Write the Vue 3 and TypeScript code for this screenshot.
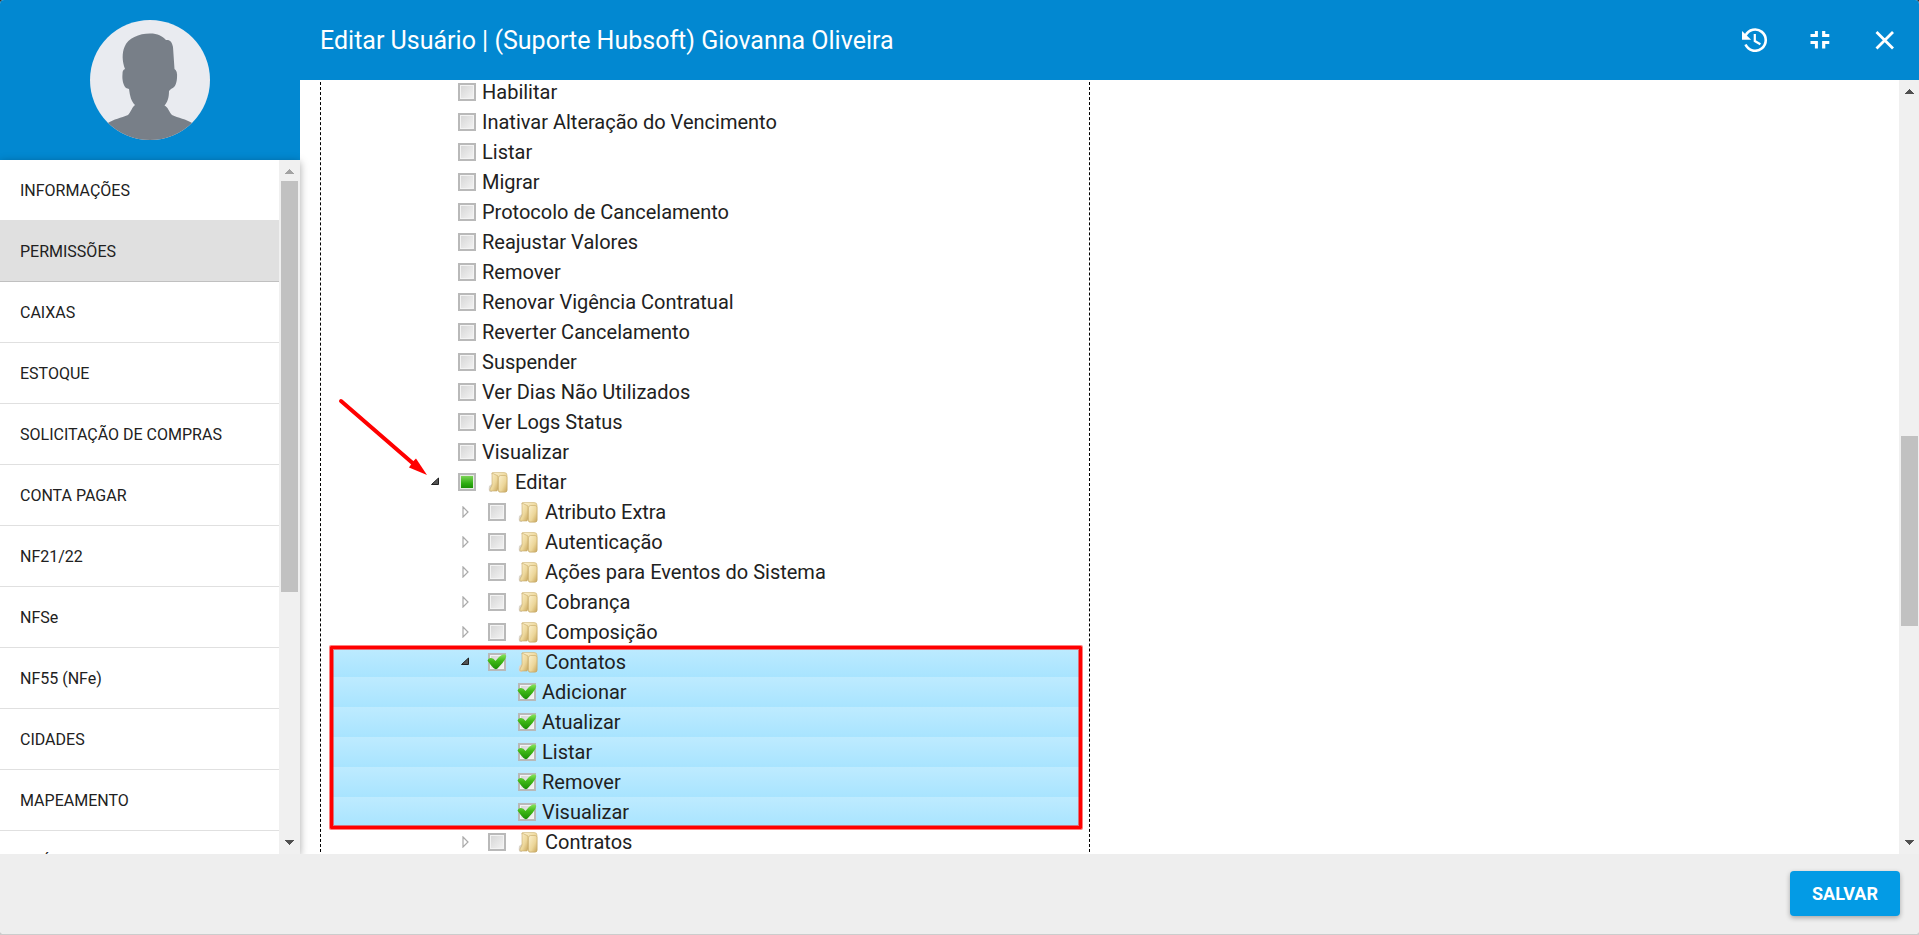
<script setup lang="ts">
import { ref } from 'vue'

type State = 'off' | 'partial' | 'on'
interface Row {
  label: string
  level: number
  state: State
  folder?: boolean
  open?: boolean
  selected?: boolean
}

const leaf = (label: string): Row => ({ label, level: 0, state: 'off' })
const folder = (label: string): Row => ({ label, level: 1, state: 'off', folder: true })
const child = (label: string): Row => ({ label, level: 2, state: 'on', selected: true })

const rows = ref<Row[]>([
  ...[
    'Habilitar',
    'Inativar Alteração do Vencimento',
    'Listar',
    'Migrar',
    'Protocolo de Cancelamento',
    'Reajustar Valores',
    'Remover',
    'Renovar Vigência Contratual',
    'Reverter Cancelamento',
    'Suspender',
    'Ver Dias Não Utilizados',
    'Ver Logs Status',
    'Visualizar',
  ].map(leaf),
  { label: 'Editar', level: 0, state: 'partial', folder: true, open: true },
  ...['Atributo Extra', 'Autenticação', 'Ações para Eventos do Sistema', 'Cobrança', 'Composição'].map(folder),
  { label: 'Contatos', level: 1, state: 'on', folder: true, open: true, selected: true },
  ...['Adicionar', 'Atualizar', 'Listar', 'Remover', 'Visualizar'].map(child),
  folder('Contratos'),
])

const tabs = [
  'INFORMAÇÕES',
  'PERMISSÕES',
  'CAIXAS',
  'ESTOQUE',
  'SOLICITAÇÃO DE COMPRAS',
  'CONTA PAGAR',
  'NF21/22',
  'NFSe',
  'NF55 (NFe)',
  'CIDADES',
  'MAPEAMENTO',
  'GRÁFICOS',
]
const active = ref('PERMISSÕES')

function toggle(row: Row) {
  row.state = row.state === 'on' ? 'off' : 'on'
}
</script>

<template>
  <div class="backdrop">
    <div class="dialog">
      <div class="upper">
        <aside class="side">
          <div class="profile">
            <svg class="avatar" viewBox="0 0 120 120" role="img" aria-label="Foto do usuário">
              <defs>
                <clipPath id="round"><circle cx="60" cy="60" r="60" /></clipPath>
              </defs>
              <g clip-path="url(#round)">
                <rect width="120" height="120" fill="#e9ebf0" />
                <path
                  fill="#787f88"
                  d="M60 13.500C68 13.500 72 16 76 20C80 19.500 82 22 83 27L84.500 49C86.500 50 87.500 53 87 58C86.500 64 85 67.500 81 69L79 71C79 78 77.500 82 74.500 85.500C78 87 79 92 82 95C88 98 96 99 103 103.500L103 120H17V103.500C24 99 31 98 38 95C41 92 42 87 45 85C41 81 40 76 39 69L36 68C33 65 32 59 32.500 54C32.500 51 33 50 35 49C32 41 32 33 34.500 27C38 18 49 13.500 60 13.500Z"
                />
              </g>
            </svg>
          </div>
          <div class="tabs">
            <nav class="tab-list">
              <button
                v-for="tab in tabs"
                :key="tab"
                type="button"
                class="tab"
                :class="{ active: tab === active }"
                @click="active = tab"
              >
                {{ tab }}
              </button>
            </nav>
            <div class="bar side-bar">
              <svg class="arrow up faded" viewBox="0 0 9 5"><path d="M4 0H5V1H6V2H7V3H8V4H9V5H0V4H1V3H2V2H3V1H4Z" /></svg>
              <div class="rail"><div class="thumb"></div></div>
              <svg class="arrow down" viewBox="0 0 9 5"><path d="M0 0H9V1H8V2H7V3H6V4H5V5H4V4H3V3H2V2H1V1H0Z" /></svg>
            </div>
          </div>
        </aside>

        <section class="main">
          <header class="top">
            <h1>Editar Usuário | (Suporte Hubsoft) Giovanna Oliveira</h1>
            <div class="actions">
              <button type="button" aria-label="Histórico">
                <svg viewBox="0 0 26 24">
                  <path d="M3.500 16.500A10.600 10.600 0 1 0 3.600 7.500" fill="none" stroke="#fff" stroke-width="2.600" />
                  <path d="M0 3V11.700H9.200Z" fill="#fff" />
                  <path d="M12.800 6V13L18.400 16.300" fill="none" stroke="#fff" stroke-width="2.200" />
                </svg>
              </button>
              <button type="button" aria-label="Sair da tela cheia">
                <svg viewBox="0 0 26 24">
                  <path d="M7.400 3H4.400V6H0V9H7.400ZM11.600 3V9H18.800V6H14.800V3ZM0 13V16H4.400V20.600H7.400V13ZM11.600 13V20.600H14.800V16H18.800V13Z" transform="translate(3.500 0)" fill="#fff" />
                </svg>
              </button>
              <button type="button" aria-label="Fechar">
                <svg viewBox="0 0 26 24">
                  <path d="M4.500 4L21 20.500M21 4L4.500 20.500" stroke="#fff" stroke-width="2.800" />
                </svg>
              </button>
            </div>
          </header>
          <div class="body">
            <div class="view">
              <div class="tree">
                <div
                  v-for="(row, i) in rows"
                  :key="i"
                  class="row"
                  :class="['level-' + row.level, { selected: row.selected, leaf: !row.folder }]"
                >
                  <button
                    v-if="row.folder"
                    type="button"
                    class="expander"
                    :aria-label="(row.open ? 'Recolher ' : 'Expandir ') + row.label"
                    :aria-expanded="!!row.open"
                  >
                    <svg viewBox="0 0 12 12">
                      <path v-if="row.open" d="M9.500 2V8.500H2.500Z" fill="#555" stroke="#222" />
                      <path v-else d="M4 1L9 6L4 11Z" fill="#fff" stroke="#aaa" stroke-width="1.200" />
                    </svg>
                  </button>
                  <span v-else class="expander"></span>
                  <span class="check">
                    <input
                      :id="'perm-' + i"
                      type="checkbox"
                      :checked="row.state === 'on'"
                      :indeterminate="row.state === 'partial'"
                      @change="toggle(row)"
                    />
                    <svg v-if="row.state === 'on'" class="tick" viewBox="0 0 20 18">
                      <defs>
                        <linearGradient id="green" x1="0" y1="0" x2="0" y2="1">
                          <stop offset="0" stop-color="#8be465" />
                          <stop offset="0.450" stop-color="#3fba16" />
                          <stop offset="1" stop-color="#1c8f06" />
                        </linearGradient>
                      </defs>
                      <path d="M0.500 7.500Q1.500 4.500 4 5Q6.500 5 8.500 8Q11.500 3.500 15.500 1.500Q19 0.500 19.300 3Q19 6 15.500 10L10.500 15.500Q8.500 17 6.500 15Q3.500 12 0.500 7.500Z" fill="url(#green)" />
                    </svg>
                  </span>
                  <svg v-if="row.folder" class="folder" viewBox="0 0 20 21">
                    <defs>
                      <linearGradient id="gold" x1="0" y1="0" x2="1" y2="1">
                        <stop offset="0" stop-color="#fbf0cd" />
                        <stop offset="0.600" stop-color="#ecd699" />
                        <stop offset="1" stop-color="#c7a55c" />
                      </linearGradient>
                    </defs>
                    <path d="M1 14L4 12V20H2Q0 19 1 14Z" fill="#ddd8ce" />
                    <path d="M4 1.500Q4 0.500 5 0.500H16Q19 0.500 19 3V18Q19 20 17 20H11Z" fill="url(#gold)" stroke="#cfb577" stroke-width="0.600" />
                    <path d="M4 1L10 4V17L9 19H2.500Q1.500 18.500 2 17L4 13Z" fill="url(#gold)" stroke="#c6a968" stroke-width="0.600" />
                    <path d="M10.500 6Q10.500 3.500 12.500 3.500H17Q19 3.500 19 5.500V18Q19 20 17 20H12Q10.500 20 10.500 18Z" fill="url(#gold)" stroke="#c6a968" stroke-width="0.600" />
                  </svg>
                  <label :for="'perm-' + i">{{ row.label }}</label>
                </div>
                <div class="highlight"></div>
                <svg class="pointer" viewBox="0 0 90 78">
                  <path d="M3 3L78 68" stroke="#f00" stroke-width="4" stroke-linecap="round" />
                  <path d="M89 77L78 60.500L75 63.500L71 69.500Z" fill="#f00" />
                </svg>
              </div>
            </div>
            <div class="bar main-bar">
              <svg class="arrow up" viewBox="0 0 9 5"><path d="M4 0H5V1H6V2H7V3H8V4H9V5H0V4H1V3H2V2H3V1H4Z" /></svg>
              <div class="rail"><div class="thumb"></div></div>
              <svg class="arrow down" viewBox="0 0 9 5"><path d="M0 0H9V1H8V2H7V3H6V4H5V5H4V4H3V3H2V2H1V1H0Z" /></svg>
            </div>
          </div>
        </section>
      </div>
      <footer class="foot">
        <button type="button" class="save">SALVAR</button>
      </footer>
    </div>
  </div>
</template>

<style>
body {
  margin: 0;
}
</style>

<style scoped>
* {
  box-sizing: border-box;
}
.backdrop {
  height: 100vh;
  padding-bottom: 1px;
  background: linear-gradient(#333 50%, #ccc 50%);
  font-family: Roboto, "Liberation Sans", sans-serif;
  color: #212121;
}
button {
  padding: 0;
  border: 0;
  background: none;
  font: inherit;
  color: inherit;
  cursor: pointer;
}
svg {
  display: block;
}
.dialog {
  display: flex;
  flex-direction: column;
  height: 100%;
  overflow: hidden;
  border-radius: 4px;
  background: #fff;
}
.upper {
  display: flex;
  flex: 1;
  min-height: 0;
}
.side {
  display: flex;
  flex-direction: column;
  width: 300px;
  z-index: 1;
}
.profile {
  display: flex;
  flex: none;
  align-items: center;
  justify-content: center;
  height: 160px;
  background: #0288d1;
}
.avatar {
  width: 120px;
  height: 120px;
}
.tabs {
  display: flex;
  flex: 1;
  min-height: 0;
  background: #fff;
  box-shadow: 0 2px 8px rgba(0, 0, 0, 0.35);
}
.tab-list {
  flex: 1;
  overflow: hidden;
}
.tab {
  display: block;
  width: 100%;
  height: 61px;
  padding: 0 20px;
  border-bottom: 1px solid #e0e0e0;
  font-size: 16px;
  text-align: left;
}
.tab.active {
  border-bottom-color: #c0c0c0;
  background: #e0e0e0;
}
.bar {
  display: flex;
  flex: none;
  flex-direction: column;
  align-items: center;
  background: #f0f0f0;
}
.side-bar {
  width: 21px;
}
.main-bar {
  width: 20px;
}
.arrow {
  width: 9px;
  height: 5px;
  fill: #505050;
}
.arrow.up {
  margin: 9px 0 7px;
}
.arrow.down {
  margin: 7px 0 9px;
}
.arrow.faded {
  fill: #a3a3a3;
}
.rail {
  flex: 1;
  width: 17px;
}
.thumb {
  background: #c1c1c1;
}
.side-bar .thumb {
  height: 63%;
}
.main-bar .thumb {
  height: 26%;
  margin-top: 335px;
}
.main {
  display: flex;
  flex: 1;
  flex-direction: column;
  min-width: 0;
}
.top {
  display: flex;
  flex: none;
  align-items: center;
  justify-content: space-between;
  height: 80px;
  padding: 0 21px 0 20px;
  background: #0288d1;
  color: #fff;
}
h1 {
  margin: 0;
  font-size: 25px;
  font-weight: 400;
}
.actions {
  display: flex;
  gap: 39px;
}
.actions svg {
  width: 26px;
  height: 24px;
}
.body {
  display: flex;
  flex: 1;
  min-height: 0;
}
.view {
  flex: 1;
  min-width: 0;
  padding-left: 20px;
  overflow: hidden;
}
.tree {
  position: relative;
  width: 770px;
  margin-top: -3px;
  padding: 0 10px;
  border: 1px dashed #000;
  border-width: 0 1px;
}
.row {
  display: flex;
  align-items: center;
  height: 30px;
  font-size: 20px;
  line-height: 30px;
}
.level-0 {
  padding-left: 98px;
}
.level-1 {
  padding-left: 128px;
}
.level-2 {
  padding-left: 158px;
}
.selected {
  background: linear-gradient(#beebff, #a8e4ff);
}
.expander {
  flex: none;
  width: 29px;
  height: 12px;
}
.expander svg {
  width: 12px;
  height: 12px;
}
.check {
  position: relative;
  flex: none;
  width: 18px;
  height: 18px;
}
.check input {
  display: block;
  width: 18px;
  height: 18px;
  margin: 0;
  appearance: none;
  border: 2px solid #b9b9b9;
  background: linear-gradient(135deg, #d4d4d4, #f4f4f4);
  box-shadow: inset 0 0 0 1px #f3f3f3;
}
.check input:indeterminate {
  background: linear-gradient(#86d860, #2fae12 60%, #188a04);
  box-shadow: inset 0 0 0 1px #e4eee0;
}
.tick {
  position: absolute;
  top: 0;
  left: -1px;
  width: 20px;
  height: 18px;
  pointer-events: none;
}
.folder {
  flex: none;
  width: 20px;
  height: 21px;
  margin-left: 12px;
}
.row label {
  margin-left: 7px;
}
.leaf label {
  margin-left: 6px;
}
.highlight {
  position: absolute;
  top: 569px;
  left: 9px;
  width: 752px;
  height: 183px;
  border: 3px solid #f00;
  border-radius: 1px;
  box-shadow: 0 0 0 1px rgba(255, 0, 0, 0.5), inset 0 0 0 1px rgba(255, 0, 0, 0.5);
  pointer-events: none;
}
.pointer {
  position: absolute;
  top: 321px;
  left: 17px;
  width: 90px;
  height: 78px;
}
.foot {
  position: relative;
  z-index: 2;
  display: flex;
  flex: none;
  align-items: center;
  justify-content: flex-end;
  height: 80px;
  padding: 0 19px 1px;
  background: #eee;
}
.save {
  width: 110px;
  height: 45px;
  border-radius: 4px;
  background: #039be5;
  box-shadow: 0 2px 5px rgba(0, 0, 0, 0.3);
  color: #fff;
  font-size: 18px;
  font-weight: 700;
}
</style>
